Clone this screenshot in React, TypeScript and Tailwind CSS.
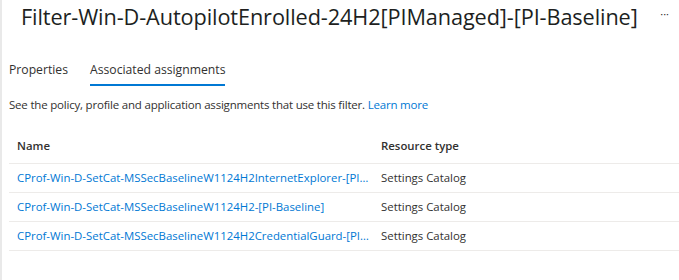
import React from "react";

const rows = [
  "CProf-Win-D-SetCat-MSSecBaselineW1124H2InternetExplorer-[PI-Baseline]",
  "CProf-Win-D-SetCat-MSSecBaselineW1124H2-[PI-Baseline]",
  "CProf-Win-D-SetCat-MSSecBaselineW1124H2CredentialGuard-[PI-Baseline]",
];

export default function App() {
  return (
    <div
      className="flex w-[679px] h-[280px] bg-white text-[#323130] overflow-hidden"
      style={{ fontFamily: '"Open Sans", "Noto Sans", sans-serif' }}
    >
      <div className="w-[2px] bg-[#e9e9e9] shrink-0" />
      <div className="flex-1 flex flex-col">
        <div className="flex items-start h-[50px]">
          <h1 className="pl-[19px] pt-[2px] text-[21.7px] leading-[30px] tracking-[-0.1px] text-[#201f1e] whitespace-nowrap">
            Filter-Win-D-AutopilotEnrolled-24H2[PIManaged]-[PI-Baseline]
          </h1>
          <div className="ml-auto mr-[10px] pt-[7px] text-[11px] leading-[14px] text-[#323130]">···</div>
        </div>
        <div className="flex pl-[7px] gap-[22px] text-[12.2px] mt-[7px]">
          <div className="h-[29px] leading-[26px]">Properties</div>
          <div className="h-[29px] leading-[26px] border-b-2 border-[#0078d4]">Associated assignments</div>
        </div>
        <div className="pl-[7px] mt-[10px] text-[11.5px] tracking-[-0.2px] leading-[18px]">
          See the policy, profile and application assignments that use this filter.{" "}
          <span className="text-[#0078d4]">Learn more</span>
        </div>
        <div className="ml-[7px] mt-[15px] text-[11.4px]">
          <div className="flex h-[35px] items-center border-b border-[#edebe9] font-semibold">
            <div className="w-[372px] pl-[8px]">Name</div>
            <div>Resource type</div>
          </div>
          {rows.map((r) => (
            <div key={r} className="flex h-[29px] items-center border-b border-[#edebe9]">
              <div className="w-[372px] pl-[8px] pr-[10px] text-[#0078d4] whitespace-nowrap overflow-hidden text-ellipsis">
                {r}
              </div>
              <div>Settings Catalog</div>
            </div>
          ))}
        </div>
      </div>
    </div>
  );
}
